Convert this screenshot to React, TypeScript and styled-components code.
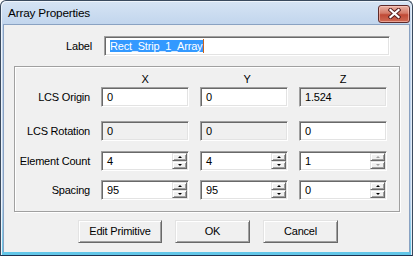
import React from 'react'
import styled, { createGlobalStyle } from 'styled-components'

const GlobalStyle = createGlobalStyle`
  html, body {
    margin: 0;
    padding: 0;
    background: #ffffff;
  }
  body {
    font-family: 'Liberation Sans', Arial, sans-serif;
    font-size: 11px;
    letter-spacing: -0.2px;
    color: #000;
  }
`

const Window = styled.div`
  width: 413px;
  height: 256px;
  box-sizing: border-box;
  display: flex;
  flex-direction: column;
  border: 1px solid #3a4a5e;
  border-bottom-color: #1d3150;
  border-radius: 6px 6px 0 0;
  background: linear-gradient(#d6e4f4, #c1d5ed 24px, #bcd2ec 200px, #62c6e8 252px);
  padding: 0 2px 2px 2px;
  box-shadow: inset 1px 1px 0 #eef4fb, inset -1px 0 0 #e2ecf7;
  overflow: hidden;
`

const TitleBar = styled.div`
  height: 23px;
  display: flex;
  align-items: center;
  padding-left: 5px;
  flex-shrink: 0;
`

const Title = styled.span`
  font-size: 11.8px;
  color: #000;
  margin-top: 1px;
`

const CloseButton = styled.div`
  margin-left: auto;
  margin-top: 2px;
  width: 32px;
  height: 18px;
  box-sizing: border-box;
  border: 1px solid #5e2a2a;
  border-radius: 3px;
  background: linear-gradient(#eab2a4, #d47a68 45%, #c04a36 55%, #cf6b55);
  box-shadow: inset 0 0 0 1px rgba(255, 210, 200, 0.55);
  display: flex;
  align-items: center;
  justify-content: center;
`

const Client = styled.div`
  flex: 1;
  display: flex;
  flex-direction: column;
  background: #f0f0f0;
  border: 1px solid #8aa2c2;
  border-bottom-color: #62c6e8;
  padding: 11px 9px 0 10px;
  box-sizing: border-box;
`

const LabelRow = styled.div`
  display: grid;
  grid-template-columns: 78px 286px;
  column-gap: 12px;
  align-items: center;
  height: 20px;
`

const RowLabel = styled.div`
  text-align: right;
  white-space: nowrap;
`

const Field = styled.div<{ $disabled?: boolean }>`
  height: 20px;
  box-sizing: border-box;
  border: 1px solid;
  border-color: #a0a0a0 #ffffff #ffffff #a0a0a0;
  box-shadow: inset 1px 1px 0 #696969, inset -1px -1px 0 #e3e3e3;
  background: ${p => (p.$disabled ? '#f0f0f0' : '#ffffff')};
  display: flex;
  align-items: center;
  padding-left: 5px;
  line-height: 14px;
`

const FieldValue = styled.span`
  flex: 1;
  white-space: nowrap;
`

const Selected = styled.span`
  background: #3399ff;
  color: #ffffff;
  padding: 0 1px 0 0;
  line-height: 14px;
`

const Caret = styled.span`
  display: inline-block;
  width: 1px;
  height: 14px;
  background: #c8641e;
  vertical-align: top;
`

const Group = styled.div`
  margin-top: 10px;
  height: 146px;
  box-sizing: border-box;
  border: 1px solid #a0a0a0;
  box-shadow: inset 1px 1px 0 #ffffff, 1px 1px 0 #ffffff;
  padding: 4px 10px 0 0;
`

const GridRow = styled.div<{ $top: number; $h: number }>`
  display: grid;
  grid-template-columns: 75px 88px 88px 88px;
  column-gap: 11px;
  align-items: center;
  height: ${p => p.$h}px;
  margin-top: ${p => p.$top}px;
`

const ColHead = styled.div<{ $shift?: number }>`
  text-align: center;
  padding-left: ${p => p.$shift ?? 0}px;
`

const Spinner = styled.div`
  width: 15px;
  height: 16px;
  margin-right: 1px;
  display: flex;
  flex-direction: column;
  flex-shrink: 0;
`

const SpinHalf = styled.div`
  flex: 1;
  box-sizing: border-box;
  background: #f0f0f0;
  border: 1px solid;
  border-color: #e3e3e3 #696969 #696969 #e3e3e3;
  box-shadow: inset 1px 1px 0 #ffffff, inset -1px -1px 0 #a0a0a0;
  display: flex;
  align-items: center;
  justify-content: center;
`

const Arrow = styled.span<{ $up?: boolean; $disabled?: boolean }>`
  width: 0;
  height: 0;
  border-left: 2px solid transparent;
  border-right: 2px solid transparent;
  ${p =>
    p.$up
      ? `border-bottom: 2px solid ${p.$disabled ? '#a0a0a0' : '#000'};`
      : `border-top: 2px solid ${p.$disabled ? '#a0a0a0' : '#000'};`}
`

const ButtonBar = styled.div`
  display: flex;
  gap: 13px;
  margin-top: 8px;
  padding-left: 64px;
`

const Button = styled.div<{ $w: number }>`
  width: ${p => p.$w}px;
  height: 23px;
  box-sizing: border-box;
  background: #f0f0f0;
  border: 1px solid;
  border-color: #e3e3e3 #696969 #696969 #e3e3e3;
  box-shadow: inset 1px 1px 0 #ffffff, inset -1px -1px 0 #a0a0a0;
  display: flex;
  align-items: center;
  justify-content: center;
  padding-bottom: 1px;
`

type Cell = { value: string; disabled?: boolean; spin?: boolean; spinDisabled?: boolean }

const rows: { label: string; top: number; cells: Cell[] }[] = [
  {
    label: 'LCS Origin',
    top: 1,
    cells: [{ value: '0' }, { value: '0' }, { value: '1.524', disabled: true }]
  },
  {
    label: 'LCS Rotation',
    top: 14,
    cells: [{ value: '0', disabled: true }, { value: '0', disabled: true }, { value: '0' }]
  },
  {
    label: 'Element Count',
    top: 10,
    cells: [
      { value: '4', spin: true },
      { value: '4', spin: true },
      { value: '1', spin: true, spinDisabled: true }
    ]
  },
  {
    label: 'Spacing',
    top: 9,
    cells: [
      { value: '95', spin: true },
      { value: '95', spin: true },
      { value: '0', spin: true }
    ]
  }
]

const CloseGlyph = () => (
  <svg width="13" height="11" viewBox="0 0 13 11">
    <path d="M2.5 2 L10.5 9 M10.5 2 L2.5 9" stroke="#5a2020" strokeWidth="4.2" strokeLinecap="square" />
    <path d="M2.5 2 L10.5 9 M10.5 2 L2.5 9" stroke="#ffffff" strokeWidth="2.2" strokeLinecap="square" />
  </svg>
)

const InputCell = ({ cell }: { cell: Cell }) => (
  <Field $disabled={cell.disabled}>
    <FieldValue>{cell.value}</FieldValue>
    {cell.spin && (
      <Spinner>
        <SpinHalf>
          <Arrow $up $disabled={cell.spinDisabled} />
        </SpinHalf>
        <SpinHalf>
          <Arrow $disabled={cell.spinDisabled} />
        </SpinHalf>
      </Spinner>
    )}
  </Field>
)

export default function App() {
  return (
    <>
      <GlobalStyle />
      <Window>
        <TitleBar>
          <Title>Array Properties</Title>
          <CloseButton>
            <CloseGlyph />
          </CloseButton>
        </TitleBar>
        <Client>
          <LabelRow>
            <RowLabel>Label</RowLabel>
            <Field>
              <FieldValue>
                <Selected>Rect_Strip_1_Array</Selected>
                <Caret />
              </FieldValue>
            </Field>
          </LabelRow>

          <Group>
            <GridRow $top={0} $h={15}>
              <span />
              <ColHead>X</ColHead>
              <ColHead $shift={6}>Y</ColHead>
              <ColHead>Z</ColHead>
            </GridRow>
            {rows.map(row => (
              <GridRow key={row.label} $top={row.top} $h={20}>
                <RowLabel>{row.label}</RowLabel>
                {row.cells.map((cell, i) => (
                  <InputCell key={i} cell={cell} />
                ))}
              </GridRow>
            ))}
          </Group>

          <ButtonBar>
            <Button $w={84}>Edit Primitive</Button>
            <Button $w={75}>OK</Button>
            <Button $w={75}>Cancel</Button>
          </ButtonBar>
        </Client>
      </Window>
    </>
  )
}
